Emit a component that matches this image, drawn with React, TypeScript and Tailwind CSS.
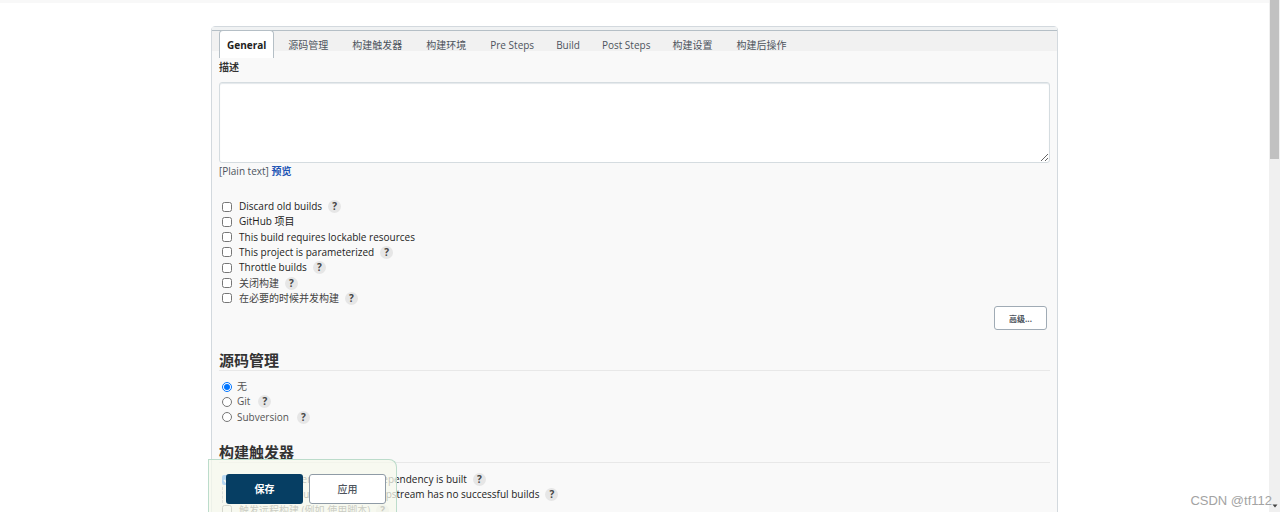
import { clsx } from "clsx";
import type { ReactNode } from "react";

interface Option {
  id: string;
  label: ReactNode;
  help?: boolean;
  bold?: boolean;
  checked?: boolean;
  nested?: boolean;
}

const tabs = [
  { label: "General" },
  { label: "源码管理" },
  { label: "构建触发器" },
  { label: "构建环境" },
  { label: "Pre Steps", narrow: true },
  { label: "Build", narrow: true },
  { label: "Post Steps", narrow: true },
  { label: "构建设置" },
  { label: "构建后操作" },
];

const generalOptions: Option[] = [
  { id: "discard", label: "Discard old builds", help: true, bold: true },
  {
    id: "github",
    label: (
      <>
        GitHub <span className="font-normal">项目</span>
      </>
    ),
    bold: true,
  },
  { id: "lockable", label: "This build requires lockable resources", bold: true },
  { id: "parameterized", label: "This project is parameterized", help: true, bold: true },
  { id: "throttle", label: "Throttle builds", help: true, bold: true },
  { id: "disable", label: "关闭构建", help: true },
  { id: "concurrent", label: "在必要的时候并发构建", help: true },
];

const scmOptions: Option[] = [
  { id: "none", label: "无", checked: true },
  { id: "git", label: "Git", help: true },
  { id: "svn", label: "Subversion", help: true },
];

const triggerOptions: Option[] = [
  { id: "snapshot", label: "Build whenever a SNAPSHOT dependency is built", help: true, bold: true, checked: true },
  {
    id: "upstream",
    label: "Schedule build when some upstream has no successful builds",
    help: true,
    bold: true,
    nested: true,
  },
  { id: "remote", label: "触发远程构建 (例如,使用脚本)", help: true },
];

const HelpButton = () => (
  <button
    type="button"
    aria-label="Help"
    className="ml-1.5 size-[13px] shrink-0 rounded-full bg-[#e6e6e6] text-center text-[10px] leading-[13px] font-bold text-[#444]"
  >
    ?
  </button>
);

const CheckRow = ({ option }: { option: Option }) => (
  <div
    className={clsx(
      "ml-[3px] flex items-center",
      option.nested && "border-l border-dashed border-gray-400 pl-3"
    )}
  >
    <input
      id={option.id}
      type="checkbox"
      defaultChecked={option.checked}
      className="m-0 size-[10px] shrink-0"
    />
    <label
      htmlFor={option.id}
      className={clsx("ml-[7px] whitespace-nowrap", option.bold ? "font-medium text-[#1c1c1c]" : "text-[#444]")}
    >
      {option.label}
    </label>
    {option.help && <HelpButton />}
  </div>
);

const RadioRow = ({ option }: { option: Option }) => (
  <div className="ml-[3px] flex items-center text-[#555]">
    <input id={option.id} type="radio" name="scm" defaultChecked={option.checked} className="m-0 size-[10px] shrink-0" />
    <label htmlFor={option.id} className="mr-0.5 ml-[5px]">
      {option.label}
    </label>
    {option.help && <HelpButton />}
  </div>
);

const SectionTitle = ({ children }: { children: string }) => (
  <h2 className="border-b border-[#e8e8e8] text-[15px] leading-5 font-bold text-[#333]">{children}</h2>
);

export default function App() {
  return (
    <div className="relative flex h-screen overflow-hidden bg-white font-['Open_Sans','Noto_Sans_CJK_SC',sans-serif] text-[10px] leading-[15px] text-[#4d545d]">
      <div className="relative min-w-0 flex-1 overflow-hidden">
        <div className="h-[3px] bg-[#f8f8f8]" />

        <main className="mx-auto mt-[23px] max-w-[847px] rounded-t-sm border border-[#d3d9de] bg-[#f9f9f9]">
          <div className="h-[3px] bg-[#f0f2f3]" />
          <nav className="flex h-[21px] border-t border-[#b5bfc6] bg-[#f1f1f1] pl-[7px]">
            {tabs.map((tab, i) => (
              <a
                key={tab.label}
                href="#"
                className={clsx(
                  "-mt-px h-7 whitespace-nowrap",
                  i === 0
                    ? "mr-[2px] rounded-t border border-b-0 border-[#b5bfc6] bg-white px-[7px] leading-7 font-bold text-[#222]"
                    : "pl-3 leading-[30px]",
                  i > 0 && (tab.narrow ? "pr-[10px]" : "pr-3")
                )}
              >
                {tab.label}
              </a>
            ))}
          </nav>

          <form className="px-[7px]">
            <label htmlFor="description" className="block pt-[9px] font-bold text-[#333]">
              描述
            </label>
            <textarea
              id="description"
              className="mt-[7px] block h-[81px] w-full rounded-[3px] border border-[#d5dce0] bg-white shadow-[inset_0_1px_1px_#e4e8eb]"
            />
            <p className="mt-px">
              [Plain text]{" "}
              <a href="#" className="font-bold text-[#1f56b5]">
                预览
              </a>
            </p>

            <div className="mt-5 grid h-[107px] grid-rows-7">
              {generalOptions.map((option) => (
                <CheckRow key={option.id} option={option} />
              ))}
            </div>

            <div className="flex justify-end pr-[3px]">
              <button
                type="button"
                className="h-6 w-[53px] rounded-[3px] border border-[#a0abb5] bg-white text-[8px] font-bold text-[#4d545d]"
              >
                高级...
              </button>
            </div>

            <div className="mt-5">
              <SectionTitle>源码管理</SectionTitle>
              <div className="mt-2 grid h-[46px] grid-rows-3">
                {scmOptions.map((option) => (
                  <RadioRow key={option.id} option={option} />
                ))}
              </div>
            </div>

            <div className="mt-[17px]">
              <SectionTitle>构建触发器</SectionTitle>
              <div className="mt-[9px] grid h-[46px] grid-rows-3">
                {triggerOptions.map((option) => (
                  <CheckRow key={option.id} option={option} />
                ))}
              </div>
            </div>
          </form>
        </main>

        <div className="absolute inset-x-0 bottom-0">
          <div className="mx-auto max-w-[853px]">
            <div className="flex w-fit gap-[6px] rounded-tr-lg border border-b-0 border-[#bcdccb] bg-[#f6f8ec]/75 pt-[14px] pr-[10px] pb-2 pl-[17px]">
              <button type="button" className="h-[30px] w-[77px] rounded-[3px] bg-[#063e63] font-bold text-white">
                保存
              </button>
              <button
                type="button"
                className="h-[30px] w-[77px] rounded-[3px] border border-[#8f9ba6] bg-white font-medium text-[#4d545d]"
              >
                应用
              </button>
            </div>
          </div>
        </div>
      </div>

      <div className="flex w-[11px] flex-col items-center justify-between bg-[#f0f0f0]">
        <div className="h-[31%] w-[9px] bg-[#c1c1c1]" />
        <svg viewBox="0 0 6 4" className="mb-1 h-1 w-1.5" fill="#444">
          <path d="M0.5 0.5h5L3 3.5z" />
        </svg>
      </div>

      <p className="absolute right-2 bottom-1 font-['Liberation_Sans',sans-serif] text-[13px] leading-[15px] text-[#a3a3a3]">
        CSDN @tf112
      </p>
    </div>
  );
}
